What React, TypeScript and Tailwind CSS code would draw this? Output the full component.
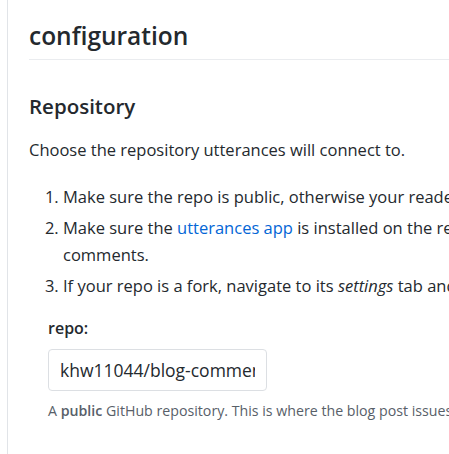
export default function App() {
  return (
    <div
      className="h-[454px] w-[449px] overflow-hidden bg-white text-[#24292e]"
      style={{ fontFamily: '"Open Sans", "Noto Sans", sans-serif' }}
    >
      <div className="ml-[7px] h-full border-l border-[#e1e4e8] pl-[21px] pt-[19px]">
        <h1 className="w-[600px] whitespace-nowrap border-b border-[#eaecef] pb-[7px] text-[24.5px] font-semibold leading-[33px]">
          configuration
        </h1>

        <h2 className="mt-[34px] text-[20.5px] font-semibold leading-[25px]">Repository</h2>

        <p className="mt-[17px] whitespace-nowrap text-[16.5px] leading-[28px]">
          Choose the repository utterances will connect to.
        </p>

        <ol className="mt-[19px] w-[600px] list-decimal pl-[34px] text-[16.5px] leading-[27px]">
          <li className="whitespace-nowrap">Make sure the repo is public, otherwise your readers will not be able to view the issues/comments.</li>
          <li className="mt-[4px] whitespace-nowrap">
            Make sure the <span className="text-[#0366d6]">utterances app</span> is installed on the repo, otherwise users will not be able to post
            <br />
            comments.
          </li>
          <li className="mt-[4px] whitespace-nowrap">
            If your repo is a fork, navigate to its <em>settings</em> tab and confirm the issues feature is turned on.
          </li>
        </ol>

        <div className="mt-[17px] pl-[19px]">
          <label className="block text-[16px] font-semibold leading-[24px]">repo:</label>
          <input
            readOnly
            value="khw11044/blog-comments"
            className="mt-[9px] h-[42px] w-[219px] rounded-[4px] border border-[#dcdfe3] px-[11px] text-[17.5px] text-[#24292e] outline-none"
          />
          <p className="mt-[10px] whitespace-nowrap text-[14.2px] leading-[20px] text-[#586069]">
            A <strong className="font-semibold">public</strong> GitHub repository. This is where the blog post issues and issue-comments will be posted.
          </p>
        </div>
      </div>
    </div>
  );
}
